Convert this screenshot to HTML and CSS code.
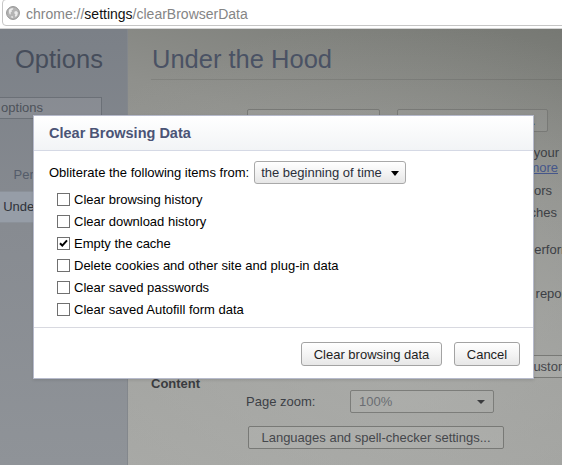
FILE: index.html
```html
<!DOCTYPE html>
<html>
<head>
<meta charset="utf-8">
<title>Options - Under the Hood</title>
<link rel="stylesheet" href="styles.css">
</head>
<body>
<div class="window">
  <div class="toolbar">
    <div class="omnibox">
      <svg class="globe" width="14" height="14" viewBox="0 0 14 14">
        <circle cx="7" cy="7" r="6.4" fill="#b4b4b4" stroke="#929292" stroke-width="1"/>
        <path d="M3.2 3.6 C4.4 2.4 6 2 7.4 2.3 L7 3.6 L5.6 4.2 L5.9 5.6 L4.6 6.6 L4.8 8.2 L3.8 8.6 C2.9 7.2 2.6 5.2 3.2 3.6 Z" fill="#ebebeb"/>
        <path d="M8.6 5.4 L10.4 5 L11.8 6.4 C11.8 8.4 11 10 9.6 11 L8.8 9.6 L9.4 8.2 L8.2 7.2 Z" fill="#ebebeb"/>
        <path d="M5.6 10 L7 10.4 L7.2 11.8 C6.4 11.8 5.6 11.5 5 11.2 Z" fill="#ebebeb"/>
      </svg>
      <span class="url"><span class="url-dim">chrome://</span>settings<span class="url-dim">/clearBrowserData</span></span>
    </div>
  </div>

  <div class="page">
    <aside class="sidebar">
      <h1 class="side-title">Options</h1>
      <div class="search"><span>Search options</span></div>
      <nav class="nav">
        <div class="nav-item">Basics</div>
        <div class="nav-item">Personal Stuff</div>
        <div class="nav-item selected">Under the Hood</div>
      </nav>
    </aside>

    <main class="main">
      <h1 class="page-title">Under the Hood</h1>

      <section class="section privacy">
        <div class="sec-label">Privacy</div>
        <div class="sec-body">
          <div class="btn-row">
            <button class="bg-btn w-content">Content settings...</button>
            <button class="bg-btn w-clear">Clear browsing data...</button>
          </div>
          <div class="line first pr-3"><span>Google Chrome may use web services to improve your</span></div>
          <div class="line pr-4"><span>browsing experience. You may optionally disable these services. <a class="link">Learn more</a></span></div>
          <div class="line opt-first pr-10"><span>Use a web service to help resolve navigation errors</span></div>
          <div class="line opt pr-5"><span>Use a suggestion service to help complete searches</span></div>
          <div class="line pr-60"><span>and URLs typed in the address bar</span></div>
          <div class="line opt over-perf"><span>Use DNS pre-fetching to improve page load performance</span></div>
          <div class="line opt pr-60"><span>Enable phishing and malware protection</span></div>
          <div class="line opt over-rep"><span>Automatically send usage statistics and crash reports to Google</span></div>
        </div>
      </section>

      <section class="section webcontent">
        <div class="sec-label wrap">Web Content</div>
        <div class="sec-body">
          <div class="ctl-row">
            <span class="ctl-label">Font size:</span>
            <div class="bg-select"><span>Medium</span><span class="bg-arrow"></span></div>
            <button class="bg-btn customize">Customize fonts...</button>
          </div>
          <div class="ctl-row zoom-row">
            <span class="ctl-label">Page zoom:</span>
            <div class="bg-select"><span>100%</span><span class="bg-arrow"></span></div>
          </div>
          <div class="ctl-row lang-row">
            <button class="bg-btn lang">Languages and spell-checker settings...</button>
          </div>
        </div>
      </section>
    </main>
  </div>

  <div class="dialog">
    <div class="dlg-header">Clear Browsing Data</div>
    <div class="dlg-body">
      <div class="from-row">
        <span>Obliterate the following items from:</span>
        <div class="select"><span>the beginning of time</span><span class="arrow"></span></div>
      </div>
      <ul class="checks">
        <li><span class="cb"></span>Clear browsing history</li>
        <li><span class="cb"></span>Clear download history</li>
        <li><span class="cb"><svg width="11" height="11" viewBox="0 0 11 11"><path d="M2 5.2 L4.3 7.6 L9 2.4" fill="none" stroke="#000" stroke-width="2"/></svg></span>Empty the cache</li>
        <li><span class="cb"></span>Delete cookies and other site and plug-in data</li>
        <li><span class="cb"></span>Clear saved passwords</li>
        <li><span class="cb"></span>Clear saved Autofill form data</li>
      </ul>
    </div>
    <div class="dlg-footer">
      <button class="btn w-cbd">Clear browsing data</button>
      <button class="btn w-cancel">Cancel</button>
    </div>
  </div>
</div>
</body>
</html>
```

FILE: styles.css
```css
* { box-sizing: border-box; }
html, body { margin: 0; padding: 0; }
body {
  width: 562px;
  height: 466px;
  overflow: hidden;
  background: #fff;
  font-family: "Liberation Sans", Arial, sans-serif;
  font-size: 13px;
}
.window {
  position: relative;
  width: 562px;
  height: 466px;
  overflow: hidden;
}

/* ---------- toolbar ---------- */
.toolbar {
  height: 30px;
  background: #fff;
  border-bottom: 1px solid #d4d4d4;
  padding-left: 2px;
}
.omnibox {
  margin-top: -1px;
  height: 27px;
  margin-right: -10px;
  border: 1px solid #c6c6c6;
  border-radius: 4px;
  background: #fff;
  display: flex;
  align-items: center;
  padding-left: 3px;
  gap: 6px;
}
.globe { flex: none; display: block; }
.url {
  font-size: 14px;
  line-height: 16px;
  padding-top: 2px;
  color: #111;
  white-space: nowrap;
}
.url-dim { color: #858585; }

/* ---------- page ---------- */
.page {
  display: flex;
  height: 436px;
}
.sidebar {
  width: 128px;
  flex: none;
  background: linear-gradient(180deg, #7b8087 0%, #878b91 45%, #8f9398 100%);
  border-right: 1px solid #83878c;
}
.side-title {
  margin: 0;
  padding: 15px 0 0 15px;
  font-size: 25.5px;
  line-height: 30px;
  font-weight: normal;
  color: #464d5b;
}
.search {
  margin-top: 23px;
  width: 102px;
  height: 22px;
  border: 1px solid #6b7077;
  border-left: none;
  background: rgba(255,255,255,0.07);
  display: flex;
  justify-content: flex-end;
  padding-right: 58px;
  line-height: 20px;
  white-space: nowrap;
  overflow: hidden;
  color: #4d525a;
}
.search span { flex: none; }
.nav { margin-top: 8px; }
.nav-item {
  height: 32px;
  line-height: 32px;
  text-align: right;
  padding-right: 32px;
  color: #545c6a;
  white-space: nowrap;
}
.nav-item.selected {
  background: #969da7;
  color: #2f333a;
  border-top: 1px solid #8b9199;
  border-bottom: 1px solid #8b9199;
  line-height: 30px;
}

.main {
  flex: 1;
  overflow: hidden;
  padding-left: 23px;
  background:
    radial-gradient(ellipse 420px 340px at 260px 330px, rgba(176,177,174,0.55), rgba(176,177,174,0) 100%),
    linear-gradient(195deg, #767873 0%, #8f908c 30%, #9c9d9a 60%, #a6a7a4 100%);
  color: #3c3f45;
}
.page-title {
  margin: 0;
  padding: 15px 0 5px 1px;
  font-size: 25.5px;
  line-height: 30px;
  font-weight: normal;
  color: #4a5264;
  border-bottom: 1px solid rgba(0,0,0,0.09);
  white-space: nowrap;
}
.section {
  display: grid;
  grid-template-columns: 95px 1fr;
}
.privacy { margin-top: 29px; }
.webcontent { margin-top: 54px; }
.sec-label {
  font-weight: bold;
  color: #3a3c40;
  line-height: 17px;
  padding-top: 3px;
}
.sec-label.wrap { max-width: 70px; }
.sec-body { min-width: 0; }

.btn-row {
  display: flex;
  gap: 17px;
  margin-left: 1px;
}
.bg-btn {
  font-family: inherit;
  font-size: 13px;
  height: 23px;
  border: 1px solid #787976;
  border-radius: 2px;
  background: rgba(255,255,255,0.06);
  color: #45474c;
  padding: 0 8px;
  white-space: nowrap;
}
.w-content { width: 133px; }
.w-clear { width: 151px; }

.line {
  display: flex;
  justify-content: flex-end;
  line-height: 15px;
  white-space: nowrap;
}
.line span { flex: none; }
.line.first { margin-top: 13px; }
.line.opt-first { margin-top: 8px; }
.line.opt { margin-top: 7px; }
.pr-3 { padding-right: 3px; }
.pr-4 { padding-right: 4px; }
.pr-5 { padding-right: 5px; }
.pr-10 { padding-right: 10px; }
.pr-60 { padding-right: 60px; }
.over-perf { margin-right: -38px; }
.over-rep { margin-right: -74px; }
.link { color: #45568a; text-decoration: underline; }

.ctl-row {
  display: flex;
  align-items: center;
  height: 23px;
}
.zoom-row { margin-top: 12px; }
.lang-row { margin-top: 13px; }
.ctl-label { width: 104px; flex: none; color: #3c3f45; }
.bg-select {
  width: 144px;
  height: 23px;
  flex: none;
  border: 1px solid #7c7d7a;
  border-radius: 2px;
  background: rgba(255,255,255,0.05);
  display: flex;
  align-items: center;
  justify-content: space-between;
  padding: 0 8px 0 8px;
  color: #6a6d72;
}
.bg-arrow {
  width: 0;
  height: 0;
  border-left: 4px solid transparent;
  border-right: 4px solid transparent;
  border-top: 4px solid #3b3c3e;
}
.customize { margin-left: 15px; padding: 0 14px; }
.lang { margin-left: 2px; width: 256px; }

/* ---------- dialog ---------- */
.dialog {
  position: absolute;
  left: 33px;
  top: 115px;
  width: 501px;
  height: 264px;
  background: #fff;
  border: 1px solid #b6bacb;
  box-shadow: 0 1px 3px rgba(0,0,0,0.12);
  color: #000;
}
.dlg-header {
  height: 35px;
  line-height: 35px;
  padding-left: 15px;
  background: linear-gradient(180deg, #ffffff 0%, #f2f4f6 100%);
  border-bottom: 1px solid #d5d9e5;
  font-size: 14.5px;
  font-weight: bold;
  color: #4b5476;
}
.dlg-body {
  padding: 10px 15px 7px 15px;
}
.from-row {
  display: flex;
  align-items: center;
  height: 23px;
  gap: 5px;
  white-space: nowrap;
}
.select {
  width: 152px;
  height: 23px;
  border: 1px solid #a9a9a9;
  border-radius: 3px;
  background: linear-gradient(180deg, #ffffff 0%, #f1f1f1 60%, #e6e6e6 100%);
  display: flex;
  align-items: center;
  justify-content: space-between;
  padding: 0 6px 0 6px;
  color: #2b2f3a;
}
.arrow {
  width: 0;
  height: 0;
  border-left: 4px solid transparent;
  border-right: 4px solid transparent;
  border-top: 5px solid #000;
  margin-top: 1px;
}
.checks {
  list-style: none;
  margin: 4px 0 0 0;
  padding: 0 0 0 8px;
}
.checks li {
  height: 22px;
  display: flex;
  align-items: center;
  white-space: nowrap;
}
.cb {
  width: 13px;
  height: 13px;
  border: 1px solid #707070;
  background: #fff;
  margin-right: 4px;
  flex: none;
  display: flex;
  align-items: center;
  justify-content: center;
}
.cb svg { display: block; }
.dlg-footer {
  border-top: 1px solid #d8d9e0;
  display: flex;
  justify-content: flex-end;
  gap: 12px;
  padding: 14px 13px 0 0;
}
.btn {
  font-family: inherit;
  font-size: 13px;
  height: 24px;
  border: 1px solid #a3a3a3;
  border-radius: 3px;
  background: linear-gradient(180deg, #ffffff 0%, #f3f3f3 55%, #e7e7e7 100%);
  color: #1e1e1e;
  padding: 0;
  white-space: nowrap;
}
.w-cbd { width: 141px; }
.w-cancel { width: 66px; }
```
